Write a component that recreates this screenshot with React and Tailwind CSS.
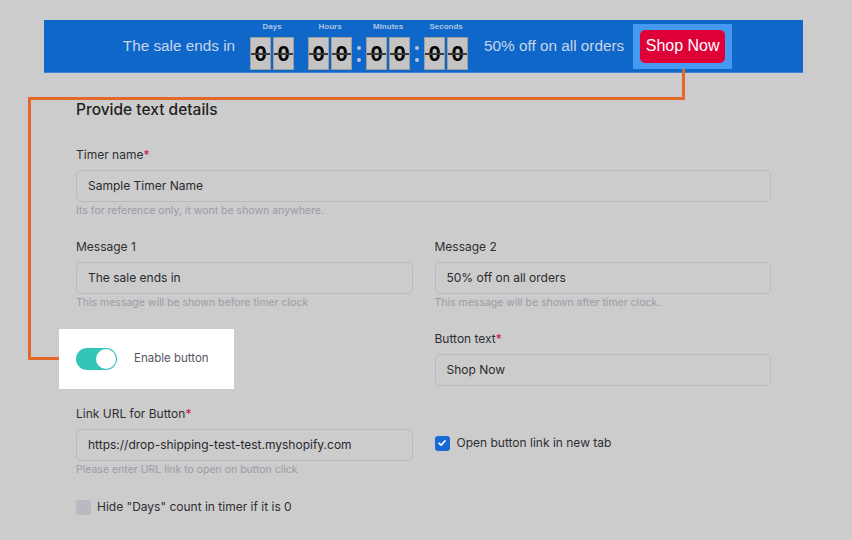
import React from "react";

const sans = { fontFamily: "Inter, 'Noto Sans', sans-serif" };

function DigitBox() {
  return (
    <div className="relative w-[21px] h-[33px] bg-[#c4c4c4] border border-[#9d9d9d] flex items-center justify-center">
      <span className="text-[22px] font-bold text-black leading-none" style={{ fontFamily: "'Liberation Sans', Arial, sans-serif" }}>0</span>
      <div className="absolute left-0 right-0 top-[15px] h-[2px] bg-[#3a3a3a]" />
    </div>
  );
}

function Group({ label }) {
  return (
    <div className="flex flex-col items-center">
      <div className="text-[8px] font-bold text-[#aec4e6] leading-[10px] mb-[5px]" style={{ fontFamily: "'Liberation Sans', Arial, sans-serif" }}>{label}</div>
      <div className="flex gap-[2px]">
        <DigitBox />
        <DigitBox />
      </div>
    </div>
  );
}

function Colon() {
  return (
    <div className="w-[14px] self-end h-[33px] flex flex-col items-center justify-center gap-[8px]">
      <div className="w-[4px] h-[4px] rounded-full bg-[#b9c7dc]" />
      <div className="w-[4px] h-[4px] rounded-full bg-[#b9c7dc]" />
    </div>
  );
}

function Field({ label, required, value, help, className = "" }) {
  return (
    <div className={className}>
      <div className="text-[12px] leading-[16px] text-[#2f2f33]">
        {label}
        {required && <span className="text-[#d0103a]">*</span>}
      </div>
      <div className="mt-[7px] h-[32px] rounded-[5px] border border-[#b9b9c2] flex items-center px-[11px] text-[12px] text-[#2a2a2e]">
        {value}
      </div>
      {help && <div className="mt-[2px] text-[10.5px] leading-[14px] text-[#9b9ba6]">{help}</div>}
    </div>
  );
}

export default function App() {
  return (
    <div className="relative w-[852px] min-h-[540px] bg-[#cccccc] overflow-hidden" style={sans}>
      {/* sale banner */}
      <div className="pt-[20px] pl-[44px] pr-[49px]">
        <div className="h-[53px] bg-[#0f67c9] border-b border-[#3d83d4] flex items-center justify-center pl-[8px]" style={{ fontFamily: "'Liberation Sans', Arial, sans-serif" }}>
          <span className="text-[15.3px] text-[#c9d6ea] mr-[15px] mt-[1px]">The sale ends in</span>
          <div className="flex items-end">
            <Group label="Days" />
            <div className="w-[14px]" />
            <Group label="Hours" />
            <Colon />
            <Group label="Minutes" />
            <Colon />
            <Group label="Seconds" />
          </div>
          <span className="text-[15.3px] text-[#c9d6ea] ml-[16px] mr-[9px] mt-[1px]">50% off on all orders</span>
          <div className="w-[99px] h-[45px] bg-[#4699f1] flex items-center justify-center">
            <div className="w-[85px] h-[33px] rounded-[5px] bg-[#df0038] text-white text-[16px] flex items-center justify-center">
              Shop Now
            </div>
          </div>
        </div>
      </div>

      {/* callout connector from the button to the toggle */}
      <div className="absolute left-[682px] top-[69px] w-[3px] h-[31px] bg-[#e2692b]" />
      <div className="absolute left-[28px] top-[97px] w-[657px] h-[3px] bg-[#e2692b]" />
      <div className="absolute left-[28px] top-[97px] w-[3px] h-[263px] bg-[#e2692b]" />
      <div className="absolute left-[28px] top-[357px] w-[31px] h-[3px] bg-[#e2692b]" />

      {/* form */}
      <div className="pl-[76px] pr-[81px] pt-[27px]">
        <h2 className="text-[15.5px] leading-[20px] font-medium text-[#1f1f23]">Provide text details</h2>

        <Field
          className="mt-[27px]"
          label="Timer name"
          required
          value="Sample Timer Name"
          help="Its for reference only, it wont be shown anywhere."
        />

        <div className="grid grid-cols-2 gap-x-[22px] mt-[21px]">
          <Field
            label="Message 1"
            value="The sale ends in"
            help="This message will be shown before timer clock"
          />
          <Field
            label="Message 2"
            value="50% off on all orders"
            help="This message will be shown after timer clock."
          />

          <div className="mt-[19px]">
            <div className="-ml-[17px] w-[175px] h-[60px] bg-white flex items-center pl-[17px]">
              <div className="w-[41px] h-[22px] rounded-full bg-[#33c6b8] relative">
                <div className="absolute right-[1px] top-[1px] w-[20px] h-[20px] rounded-full bg-white" />
              </div>
              <span className="ml-[17px] text-[11.5px] text-[#55555e]">Enable button</span>
            </div>
          </div>
          <Field className="mt-[21px]" label="Button text" required value="Shop Now" />

          <Field
            className="mt-[17px]"
            label="Link URL for Button"
            required
            value="https://drop-shipping-test-test.myshopify.com"
            help="Please enter URL link to open on button click"
          />
          <div className="mt-[17px] pt-[28px] self-start flex items-center">
            <div className="w-[15px] h-[15px] rounded-[3px] bg-[#1769d3] flex items-center justify-center">
              <svg width="10" height="10" viewBox="0 0 10 10" fill="none">
                <path d="M2 5.2 L4.1 7.2 L8 2.9" stroke="white" strokeWidth="1.6" strokeLinecap="round" strokeLinejoin="round" />
              </svg>
            </div>
            <span className="ml-[7px] text-[12px] text-[#2f2f33]">Open button link in new tab</span>
          </div>
        </div>

        <div className="mt-[21px] flex items-center">
          <div className="w-[15px] h-[15px] rounded-[3px] bg-[#b9b9c2]" />
          <span className="ml-[6px] text-[12px] text-[#2f2f33]">Hide "Days" count in timer if it is 0</span>
        </div>
      </div>
    </div>
  );
}
